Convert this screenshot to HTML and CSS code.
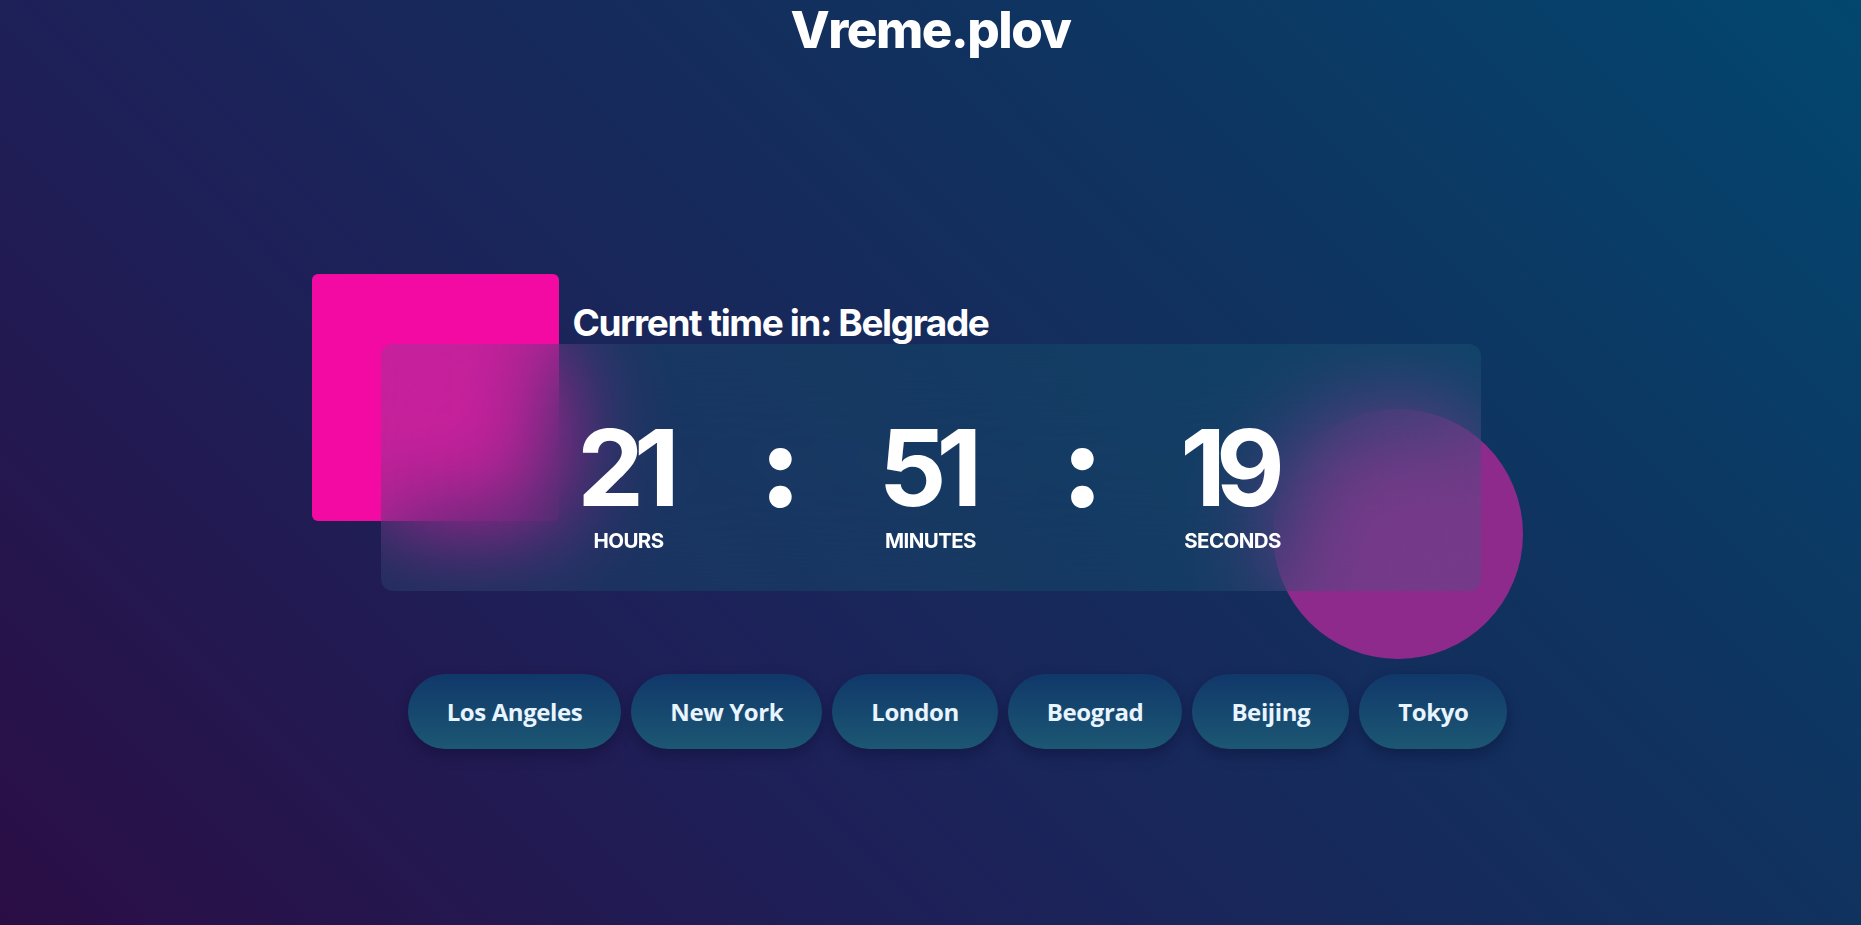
FILE: index.html
```html
<!DOCTYPE html>
<html lang="en">
<head>
<meta charset="utf-8">
<title>Vreme.plov</title>
<link rel="stylesheet" href="styles.css">
</head>
<body>
<header class="brand">Vreme.plov</header>
<main class="stage">
  <section class="clock">
    <div class="shape square"></div>
    <div class="shape circle"></div>
    <h2 class="city-title">Current time in: Belgrade</h2>
    <div class="card">
      <div class="unit"><span class="num">21</span><span class="label">HOURS</span></div>
      <span class="colon">:</span>
      <div class="unit"><span class="num">51</span><span class="label">MINUTES</span></div>
      <span class="colon">:</span>
      <div class="unit"><span class="num">19</span><span class="label">SECONDS</span></div>
    </div>
  </section>
  <nav class="cities">
    <button class="city">Los Angeles</button>
    <button class="city">New York</button>
    <button class="city">London</button>
    <button class="city">Beograd</button>
    <button class="city">Beijing</button>
    <button class="city">Tokyo</button>
  </nav>
</main>
</body>
</html>
```
FILE: styles.css
```css
html, body {
  margin: 0;
  height: 100%;
}
body {
  overflow: hidden;
  font-family: Inter, "Noto Sans", sans-serif;
  color: #fff;
  background: linear-gradient(45deg, #2b0d45 0%, #1e2058 33%, #10325f 67%, #02476f 100%);
}
.brand {
  margin-top: 0;
  text-align: center;
  font-size: 51px;
  line-height: 1.16;
  font-weight: 800;
  letter-spacing: -1.5px;
}
.stage {
  display: flex;
  flex-direction: column;
}
.clock {
  position: relative;
  width: 1100px;
  margin: 242px auto 0;
}
.shape {
  position: absolute;
}
.square {
  left: -69px;
  top: -27px;
  width: 247px;
  height: 247px;
  border-radius: 6px;
  background: #f30aa3;
}
.circle {
  left: 892px;
  top: 108px;
  width: 250px;
  height: 250px;
  border-radius: 50%;
  background: #8e2a8c;
}
.city-title {
  position: relative;
  z-index: 1;
  margin: 0 0 0 192px;
  font-size: 37px;
  line-height: 1.2;
  font-weight: 700;
  letter-spacing: -1.4px;
}
.card {
  position: relative;
  z-index: 1;
  height: 247px;
  margin-top: -2px;
  box-sizing: border-box;
  padding-top: 76px;
  display: flex;
  justify-content: center;
  align-items: flex-start;
  gap: 76px;
  border-radius: 12px;
  background: rgba(20, 125, 130, 0.2);
  backdrop-filter: blur(50px);
  -webkit-backdrop-filter: blur(50px);
}
.unit {
  width: 110px;
  display: flex;
  flex-direction: column;
  align-items: center;
}
.num {
  font-size: 106px;
  line-height: 0.9;
  font-weight: 700;
  letter-spacing: -10px;
  text-indent: -10px;
  white-space: nowrap;
}
.label {
  margin-top: 16px;
  font-size: 20.5px;
  line-height: 1;
  font-weight: 700;
  letter-spacing: -0.6px;
}
.colon {
  width: 40px;
  text-align: center;
  font-size: 112px;
  line-height: 0.9;
  margin-top: -4px;
  font-weight: 900;
}
.cities {
  display: flex;
  justify-content: center;
  gap: 10px;
  margin-top: 83px;
  padding-left: 54px;
}
.city {
  height: 75px;
  padding: 0 39px;
  border: none;
  border-radius: 38px;
  font-family: "Open Sans", "Noto Sans", sans-serif;
  font-size: 24px;
  font-weight: 700;
  letter-spacing: -0.4px;
  color: #e8f4ff;
  background: linear-gradient(180deg, #10386a 0%, #1c5773 100%);
  box-shadow: 0 6px 14px rgba(5, 10, 40, 0.35);
}
```
